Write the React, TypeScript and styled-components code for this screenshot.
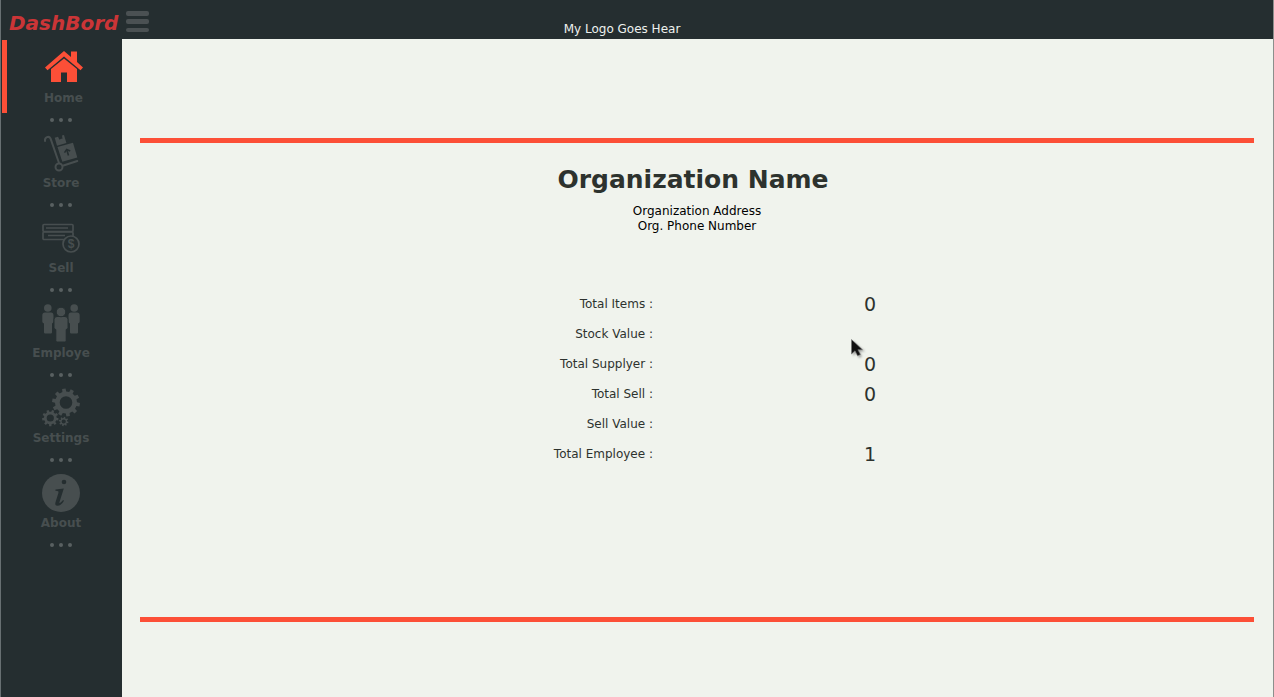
import React from "react";
import styled, { createGlobalStyle } from "styled-components";

const color = {
  dark: "#252e30",
  paper: "#f0f3ed",
  accent: "#fc4f37",
  brand: "#cb3537",
  muted: "#474e4f",
  ink: "#2d322e",
};

const GlobalStyle = createGlobalStyle`
  * { box-sizing: border-box; }
  body {
    margin: 0;
    background: ${color.paper};
    font-family: "DejaVu Sans", Verdana, sans-serif;
    font-size: 12px;
    line-height: 15px;
  }
`;

const Page = styled.div`
  display: flex;
  flex-direction: column;
  min-height: 100vh;
  border-left: 1px solid #687072;
  border-right: 1px solid #8c8f8c;
`;

const Header = styled.header`
  display: flex;
  height: 39px;
  background: ${color.dark};
`;

const Brand = styled.div`
  width: 125px;
  padding: 11px 0 0 8px;
  color: ${color.brand};
  font-size: 20px;
  font-weight: bold;
  font-style: italic;
  line-height: 24px;
`;

const MenuButton = styled.button`
  align-self: flex-start;
  display: block;
  margin-top: 11px;
  padding: 0;
  border: 0;
  background: none;
  color: #4b5153;
  cursor: pointer;

  svg { display: block; }
`;

const HeaderTitle = styled.div`
  flex: 1;
  padding: 22px 178px 0 0;
  color: #eef1ee;
  text-align: center;
`;

const Body = styled.div`
  flex: 1;
  display: flex;
`;

const Sidebar = styled.nav`
  flex: none;
  width: 121px;
  padding: 1px 2px 0 0;
  background: ${color.dark};
`;

const NavLink = styled.a<{ $active?: boolean }>`
  display: flex;
  flex-direction: column;
  align-items: center;
  gap: 4px;
  height: 73px;
  margin-left: 1px;
  padding-top: 9px;
  border-left: ${(p) => (p.$active ? `5px solid ${color.accent}` : "0")};
  color: ${color.muted};
  font-weight: bold;
  text-decoration: none;

  svg {
    flex: none;
    overflow: visible;
    color: ${(p) => (p.$active ? color.accent : color.muted)};
  }
`;

const Dots = styled.div`
  display: flex;
  align-items: center;
  justify-content: center;
  gap: 5px;
  height: 12px;
  padding-top: 2px;
`;

const Dot = styled.span`
  width: 4px;
  height: 4px;
  border-radius: 50%;
  background: #596061;
`;

const Main = styled.main`
  flex: 1;
  display: flex;
  flex-direction: column;
  padding: 99px 19px 75px 18px;
  background: ${color.paper};
`;

const Panel = styled.section`
  flex: 1;
  padding-top: 22px;
  border-top: 5px solid ${color.accent};
  border-bottom: 5px solid ${color.accent};
  text-align: center;
`;

const OrgName = styled.h1`
  margin: 0 0 9px;
  padding-right: 8px;
  color: ${color.ink};
  font-size: 25px;
  line-height: 30px;
`;

const OrgLine = styled.p`
  margin: 0;
  color: #000;
`;

const Stats = styled.div`
  position: relative;
  width: 780px;
  max-width: 100%;
  margin: 55px auto 0;
`;

const StatsTable = styled.table`
  width: 100%;
  border-collapse: collapse;
  table-layout: fixed;
  color: ${color.ink};
`;

const StatLabel = styled.th`
  width: 346px;
  height: 30px;
  padding: 0;
  font-weight: normal;
  text-align: right;
`;

const StatValue = styled.td`
  height: 30px;
  padding: 0;
  font-size: 19px;
  line-height: 24px;
  text-align: center;
`;

const Pointer = styled.svg`
  position: absolute;
  top: 50px;
  left: 544px;
  pointer-events: none;
`;

const Icon = ({ children }: { children: React.ReactNode }) => (
  <svg width="38" height="38" viewBox="0 0 38 38" fill="currentColor" aria-hidden="true">
    {children}
  </svg>
);

function gear(cx: number, cy: number, outer: number, root: number, hole: number, teeth: number) {
  const step = (Math.PI * 2) / teeth;
  const at = (r: number, a: number) =>
    `${(cx + r * Math.cos(a)).toFixed(2)} ${(cy + r * Math.sin(a)).toFixed(2)}`;
  const points: string[] = [];
  for (let i = 0; i < teeth; i++) {
    const a = i * step + step / 4;
    points.push(at(root, a - step * 0.28), at(outer, a - step * 0.2), at(outer, a + step * 0.2), at(root, a + step * 0.28));
  }
  return `M${points.join("L")}ZM${cx - hole} ${cy}a${hole} ${hole} 0 1 0 ${hole * 2} 0a${hole} ${hole} 0 1 0 ${-hole * 2} 0Z`;
}

const HomeIcon = () => (
  <Icon>
    <path d="M0 18.5 19 2l7 6V2.5h6V13l6 5.500-2.500 2.800L19 7.500 2.500 21.300Z" />
    <path d="M6 20 19 9.500 32 20v13H22v-9.500h-6V33H6Z" />
  </Icon>
);

const StoreIcon = () => (
  <Icon>
    <path
      d="M3 7C2.500 3 7 1.500 8.500 4.500L17 29M21.500 31.500 35.300 27"
      fill="none"
      stroke="currentColor"
      strokeWidth="2"
      strokeLinecap="round"
    />
    <circle cx="17" cy="33" r="3.500" fill="none" stroke="currentColor" strokeWidth="2" />
    <path d="m12.700 3.700 3.300-1 1.500 3 1.500-1 1.500 0-.5-3.200L22 1l2.400 8-9.400 2.700Z" />
    <path d="m15.500 13 15.500-4.200 4.300 14.700-15 4.200Z" />
    <path d="m26.500 21.500-1.600-5.500m-2.400 2.600 2.200-3.200 3.500 1.600" fill="none" stroke={color.dark} strokeWidth="1.600" />
  </Icon>
);

const SellIcon = () => (
  <Icon>
    <g fill="none" stroke="currentColor" strokeWidth="1.700">
      <rect x="1" y="5.500" width="30" height="7" rx="1" />
      <rect x="1" y="13" width="30" height="7.500" rx="1" />
      <path d="M4 9h22M6 16.500h17" />
      <circle cx="29" cy="25" r="8" fill={color.dark} />
    </g>
    <text x="29" y="29" textAnchor="middle" fontSize="12" fontWeight="bold" fontFamily="Liberation Sans, sans-serif">
      $
    </text>
  </Icon>
);

const sidePerson = "M3 8.500h6q2.500 0 2.500 3v6q0 1.500-1.500 2v9q0 1-1.200 1H3.200q-1.200 0-1.200-1v-9q-1.700-.5-1.700-2v-6q0-3 2.700-3Z";

const EmployeeIcon = () => (
  <Icon>
    <circle cx="5.800" cy="4" r="3.800" />
    <circle cx="32.200" cy="4" r="3.800" />
    <path d={sidePerson} />
    <path d={sidePerson} transform="matrix(-1 0 0 1 38 0)" />
    <g stroke={color.dark} strokeWidth="1">
      <path d="M15 12.500h8q3 0 3 3v8q0 1.500-1.800 2v11q0 1.500-1.500 1.500h-7.400q-1.500 0-1.500-1.500v-11q-1.800-.5-1.800-2v-8q0-3 3-3Z" />
      <circle cx="19" cy="8" r="4.800" />
    </g>
  </Icon>
);

const SettingsIcon = () => (
  <Icon>
    <path
      fillRule="evenodd"
      d={gear(24, 13.5, 14, 11, 6.3, 10) + gear(8.3, 29, 8.3, 6.4, 3.6, 9) + gear(21.7, 32.5, 4.8, 3.5, 2.1, 8)}
    />
  </Icon>
);

const AboutIcon = () => (
  <Icon>
    <circle cx="19" cy="19" r="19" />
    <circle cx="22" cy="8" r="2.300" fill={color.dark} />
    <path
      d="m13.500 15.500 8.300-1-4.300 13.500q-.4 1.500.8.800 1.500-1 2.800-2.800l.9.700q-3 5-6.500 5-3 0-2-3.500l2.900-9.200q.6-1.800-1-2l-2-.3Z"
      fill={color.dark}
    />
  </Icon>
);

const navItems = [
  { label: "Home", icon: HomeIcon, active: true },
  { label: "Store", icon: StoreIcon },
  { label: "Sell", icon: SellIcon },
  { label: "Employe", icon: EmployeeIcon },
  { label: "Settings", icon: SettingsIcon },
  { label: "About", icon: AboutIcon },
];

const stats = [
  { label: "Total Items :", value: "0" },
  { label: "Stock Value :", value: "" },
  { label: "Total Supplyer :", value: "0" },
  { label: "Total Sell :", value: "0" },
  { label: "Sell Value :", value: "" },
  { label: "Total Employee :", value: "1" },
];

export default function App() {
  return (
    <>
      <GlobalStyle />
      <Page>
        <Header>
          <Brand>DashBord</Brand>
          <MenuButton type="button" aria-label="Toggle menu">
            <svg width="23" height="22" viewBox="0 0 23 22" fill="currentColor">
              <rect width="23" height="5" rx="2" />
              <rect y="8" width="23" height="5" rx="2" />
              <rect y="17" width="23" height="4" rx="2" />
            </svg>
          </MenuButton>
          <HeaderTitle>My Logo Goes Hear</HeaderTitle>
        </Header>
        <Body>
          <Sidebar aria-label="Main">
            {navItems.map(({ label, icon: ItemIcon, active }) => (
              <React.Fragment key={label}>
                <NavLink href={`#${label.toLowerCase()}`} $active={active} aria-current={active ? "page" : undefined}>
                  <ItemIcon />
                  {label}
                </NavLink>
                <Dots aria-hidden="true">
                  <Dot />
                  <Dot />
                  <Dot />
                </Dots>
              </React.Fragment>
            ))}
          </Sidebar>
          <Main>
            <Panel>
              <OrgName>Organization Name</OrgName>
              <OrgLine>Organization Address</OrgLine>
              <OrgLine>Org. Phone Number</OrgLine>
              <Stats>
                <StatsTable>
                  <tbody>
                    {stats.map(({ label, value }) => (
                      <tr key={label}>
                        <StatLabel scope="row">{label}</StatLabel>
                        <StatValue>{value}</StatValue>
                      </tr>
                    ))}
                  </tbody>
                </StatsTable>
                <Pointer width="18" height="22" viewBox="0 0 18 22" aria-hidden="true">
                  <path
                    d="M2 2v15l3.500-3.300L8 19l3-1.400-2.400-5H14Z"
                    fill="#555"
                    opacity=".5"
                    filter="blur(1px)"
                  />
                  <path d="M.5.500v14.500l3.500-3.200 2.600 5 2.800-1.300-2.500-4.800h4.600Z" fill="#111" stroke="#777" strokeWidth=".6" />
                </Pointer>
              </Stats>
            </Panel>
          </Main>
        </Body>
      </Page>
    </>
  );
}
